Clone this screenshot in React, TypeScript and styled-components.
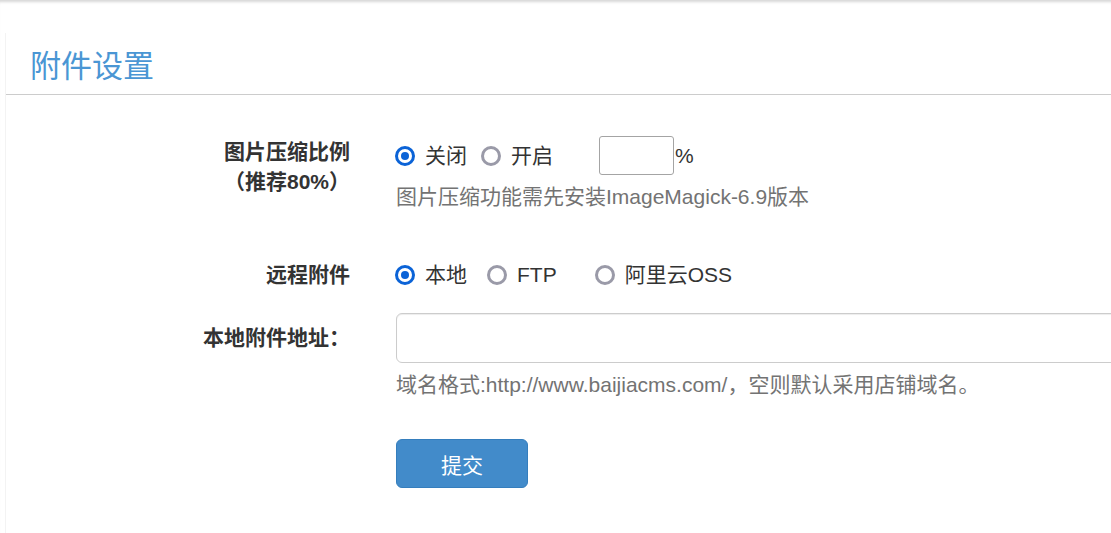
import React from "react";
import styled, { createGlobalStyle } from "styled-components";

const GlobalStyle = createGlobalStyle`
  html, body {
    margin: 0;
    padding: 0;
    background: #ffffff;
    overflow: hidden;
    font-family: "Liberation Sans", Arial, "Noto Sans CJK SC", sans-serif;
    color: #333333;
  }
  * { box-sizing: border-box; }
`;

const Page = styled.div`
  min-height: 533px;
  padding-top: 33px;
  box-shadow: inset 0 4px 3px -2px rgba(0, 0, 0, 0.16);
`;

const Panel = styled.div`
  margin-left: 5px;
  border-left: 1px solid #f3f3f3;
  min-height: 500px;
  width: 1400px;
`;

const Title = styled.h3`
  margin: 0;
  padding: 14px 0 7px 24px;
  font-size: 31px;
  line-height: 40px;
  font-weight: normal;
  color: #4a96d4;
  border-bottom: 1px solid #cccccc;
`;

const Form = styled.form`
  padding-top: 41px;
`;

const FormRow = styled.div<{ $mb: number }>`
  display: grid;
  grid-template-columns: 344px 1fr;
  column-gap: 46px;
  margin-bottom: ${(p) => p.$mb}px;
`;

const Label = styled.label<{ $pt: number }>`
  text-align: right;
  font-weight: bold;
  font-size: 21px;
  line-height: 30px;
  padding-top: ${(p) => p.$pt}px;
  color: #333333;
`;

const Controls = styled.div`
  display: flex;
  flex-direction: column;
  align-items: flex-start;
`;

const InlineLine = styled.div<{ $h: number }>`
  display: flex;
  align-items: center;
  height: ${(p) => p.$h}px;
`;

const Option = styled.label<{ $mr: number }>`
  display: inline-flex;
  align-items: center;
  gap: 10px;
  margin-right: ${(p) => p.$mr}px;
  font-size: 21px;
  line-height: 30px;
  color: #333333;
`;

const RadioDot = styled.span<{ $checked: boolean }>`
  flex: 0 0 20px;
  width: 20px;
  height: 20px;
  margin-left: -1px;
  border-radius: 50%;
  border: ${(p) => (p.$checked ? "3.5px solid #0b63d7" : "3px solid #9a9aa8")};
  display: inline-flex;
  align-items: center;
  justify-content: center;
  background: #fff;
  &::after {
    content: "";
    width: 8px;
    height: 8px;
    border-radius: 50%;
    background: ${(p) => (p.$checked ? "#0b63d7" : "transparent")};
  }
`;

const SmallInput = styled.input`
  width: 75px;
  height: 39px;
  border: 1px solid #a4a4a4;
  border-radius: 3px;
  padding: 0 4px;
  font-size: 20px;
  outline: none;
`;

const Suffix = styled.span`
  font-size: 21px;
  line-height: 30px;
  margin-left: 1px;
  color: #333333;
`;

const Help = styled.p`
  margin: 7px 0 0;
  font-size: 21px;
  line-height: 30px;
  color: #737373;
`;

const TextInput = styled.input`
  width: 900px;
  height: 50px;
  border: 1px solid #cccccc;
  border-radius: 6px;
  box-shadow: inset 0 1px 1px rgba(0, 0, 0, 0.075);
  padding: 9px 18px;
  font-size: 21px;
  outline: none;
`;

const SubmitButton = styled.button`
  width: 132px;
  height: 49px;
  background: #428bca;
  border: 1px solid #357ebd;
  border-radius: 6px;
  color: #ffffff;
  font-size: 21px;
  font-family: "Liberation Sans", Arial, "Noto Sans CJK SC", sans-serif;
  padding: 0;
  cursor: pointer;
`;

type Opt = { text: string; checked: boolean; mr: number };

const RadioGroup: React.FC<{ options: Opt[] }> = ({ options }) => (
  <>
    {options.map((o) => (
      <Option key={o.text} $mr={o.mr}>
        <RadioDot $checked={o.checked} />
        {o.text}
      </Option>
    ))}
  </>
);

export default function App() {
  return (
    <>
      <GlobalStyle />
      <Page>
        <Panel>
          <Title>附件设置</Title>
          <Form onSubmit={(e) => e.preventDefault()}>
            <FormRow $mb={48}>
              <Label $pt={1}>
                图片压缩比例
                <br />
                （推荐80%）
              </Label>
              <Controls>
                <InlineLine $h={39}>
                  <RadioGroup
                    options={[
                      { text: "关闭", checked: true, mr: 15 },
                      { text: "开启", checked: false, mr: 46 },
                    ]}
                  />
                  <SmallInput type="text" />
                  <Suffix>%</Suffix>
                </InlineLine>
                <Help>图片压缩功能需先安装ImageMagick-6.9版本</Help>
              </Controls>
            </FormRow>

            <FormRow $mb={23}>
              <Label $pt={0}>远程附件</Label>
              <Controls>
                <InlineLine $h={30}>
                  <RadioGroup
                    options={[
                      { text: "本地", checked: true, mr: 21 },
                      { text: "FTP", checked: false, mr: 39 },
                      { text: "阿里云OSS", checked: false, mr: 0 },
                    ]}
                  />
                </InlineLine>
              </Controls>
            </FormRow>

            <FormRow $mb={39}>
              <Label $pt={10}>本地附件地址：</Label>
              <Controls>
                <TextInput type="text" />
                <Help>域名格式:http://www.baijiacms.com/，空则默认采用店铺域名。</Help>
              </Controls>
            </FormRow>

            <FormRow $mb={0}>
              <span />
              <Controls>
                <SubmitButton type="submit">提交</SubmitButton>
              </Controls>
            </FormRow>
          </Form>
        </Panel>
      </Page>
    </>
  );
}
